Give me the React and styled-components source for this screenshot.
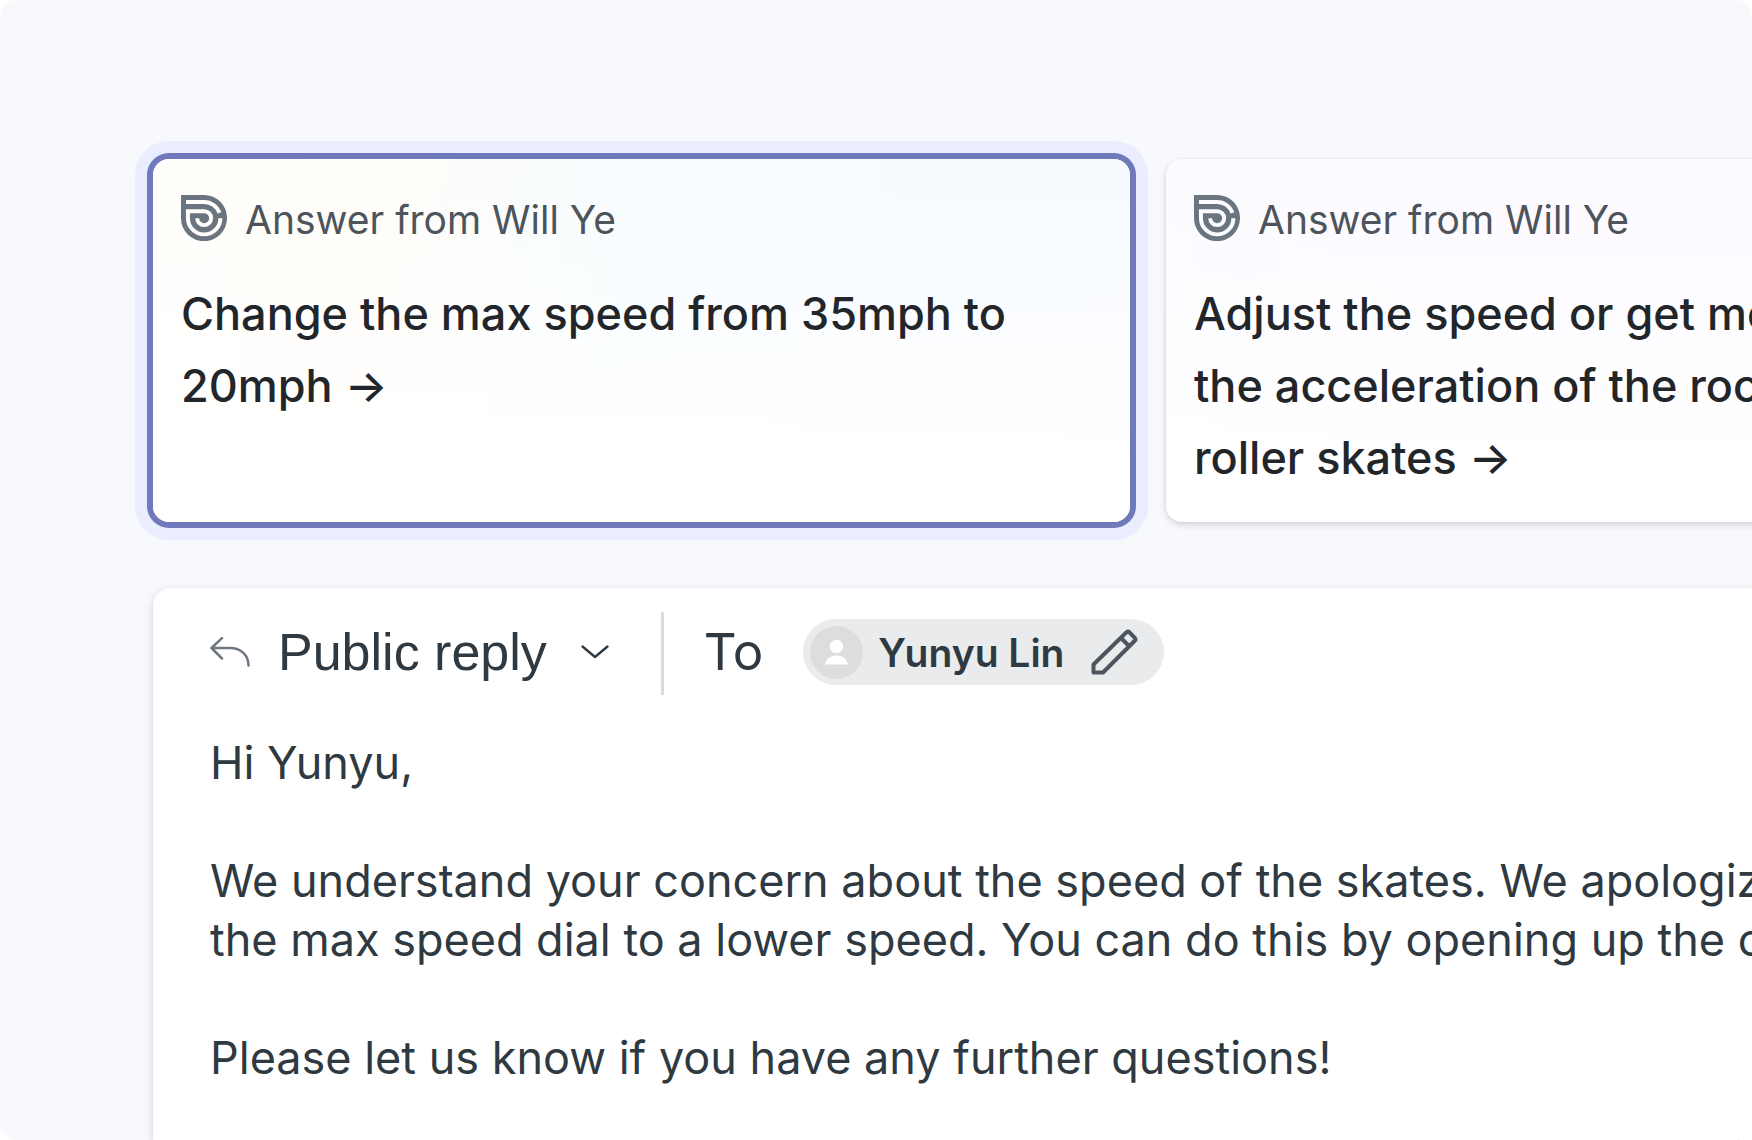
import styled, { createGlobalStyle } from "styled-components";
import React, { useState } from "react";

const GlobalStyle = createGlobalStyle`
  * {
    box-sizing: border-box;
  }

  body {
    margin: 0;
    background: #fff;
    font-family: Inter, "Liberation Sans", sans-serif;
  }

  button, select, textarea {
    margin: 0;
    padding: 0;
    border: none;
    background: none;
    font-family: inherit;
  }
`

const Page = styled.main`
  display: flex;
  flex-direction: column;
  gap: 66px;
  height: 100vh;
  padding: 159px 0 0 153px;
  overflow: hidden;
  border-radius: 18px;
  background: #f8f9fd;
`

const AnswerList = styled.div`
  display: flex;
  flex: none;
  gap: 36px;
`

const AnswerCard = styled.button`
  display: flex;
  flex: 0 0 61.1%;
  flex-direction: column;
  gap: 33px;
  padding: 36px 28px 28px;
  border-radius: 16px;
  background: ${({ $tint }) => `linear-gradient(to bottom, rgba(255, 255, 255, 0), #fff 85%), ${$tint}`};
  box-shadow: ${({ $selected }) => $selected
    ? "0 0 0 6px #707abb, 0 0 0 18px #eaedff"
    : "0 3px 6px rgba(23, 26, 38, 0.16), 0 0 3px rgba(23, 26, 38, 0.06)"};
  text-align: left;
  cursor: pointer;
`

const AnswerHead = styled.span`
  display: flex;
  gap: 18px;
  color: #4d545b;
  font-size: 39px;
  line-height: 50px;
`

const AnswerTitle = styled.span`
  color: #22262a;
  font-size: 45px;
  font-weight: 500;
  line-height: 72px;
  white-space: pre-line;
`

const Editor = styled.section`
  display: flex;
  flex: 1;
  flex-direction: column;
  gap: 38px;
  padding: 24px 0 0 57px;
  border-radius: 18px 0 0 0;
  background: #fff;
  box-shadow: 0 3px 8px rgba(23, 26, 38, 0.18);
`

const Toolbar = styled.div`
  display: flex;
  align-items: center;
  height: 83px;
  padding-bottom: 3px;
  color: #2f3941;
`

const ReplyType = styled.label`
  display: flex;
  align-items: center;
  gap: 28px;
`

const ReplySelect = styled.select`
  appearance: none;
  field-sizing: content;
  padding-right: 6px;
  color: inherit;
  font-family: "Liberation Sans", Arial, sans-serif;
  font-size: 52px;
  line-height: 60px;
`

const Divider = styled.span`
  align-self: flex-start;
  width: 3px;
  height: 83px;
  margin: 0 40px 0 52px;
  background: #d8dcde;
`

const ToLabel = styled.span`
  font-size: 51px;
  line-height: 60px;
`

const Recipient = styled.span`
  display: flex;
  align-items: center;
  height: 66px;
  margin-left: 40px;
  padding: 0 26px 0 7px;
  border-radius: 33px;
  background: #e9ebed;
  font-size: 39px;
  font-weight: 600;
`

const RecipientName = styled.span`
  margin: 0 27px 0 15px;
`

const EditButton = styled.button`
  display: flex;
  cursor: pointer;
`

const ReplyText = styled.textarea`
  flex: 1;
  min-height: 400px;
  overflow: hidden;
  resize: none;
  outline: none;
  color: #2f3941;
  font-size: 45px;
  line-height: 59px;
  white-space: pre;
`

function LogoIcon({ id }) {
  return (
    <svg width="46" height="46" viewBox="0 0 139 139" fill="none" aria-hidden="true">
      <mask id={id}>
        <path d="M0 0H70A69 69 0 0 1 139 70A69 69 0 0 1 0 70Z" fill="#fff" />
        <path d="M15 21H70A49 49 0 0 1 116 54" stroke="#000" strokeWidth="12" />
        <path d="M119 70A49 49 0 0 1 21 70V49H70A21 21 0 1 1 49 70" stroke="#000" strokeWidth="12" />
      </mask>
      <path d="M0 0H139V139H0Z" fill="#6b757f" mask={`url(#${id})`} />
    </svg>
  )
}

function ReplyIcon() {
  return (
    <svg width="40" height="30" viewBox="0 0 40 30" fill="none" stroke="#6f7782" strokeWidth="2.5" strokeLinecap="round" strokeLinejoin="round" aria-hidden="true">
      <path d="M12 1.200L1.500 11L12 21.500M1.500 11H20C31 11 38.500 18 38.500 28.500" />
    </svg>
  )
}

function ChevronIcon() {
  return (
    <svg width="28" height="14" viewBox="0 0 28 14" fill="none" stroke="#2f3941" strokeWidth="2.3" strokeLinecap="round" strokeLinejoin="round" aria-hidden="true">
      <path d="M1.500 1.500L14 12L26.500 1.500" />
    </svg>
  )
}

function AvatarIcon() {
  return (
    <svg width="53" height="53" viewBox="0 0 53 53" fill="#fff" aria-hidden="true">
      <circle cx="26.5" cy="26.5" r="26.5" fill="#ddd" />
      <circle cx="26.5" cy="20.5" r="6.7" />
      <path d="M15 38.500C16 32.500 21 29.500 26.500 29.500C32 29.500 37 32.500 38 38.500Z" />
    </svg>
  )
}

function PencilIcon() {
  return (
    <svg width="47" height="46" viewBox="0 0 47 46" fill="none" stroke="#4d565f" strokeWidth="4" strokeLinejoin="round" aria-hidden="true">
      <path d="M2.500 43.500V35.500L35.500 3.300Q37 2 38.500 3.300L44 9.200Q45 10.500 44 11.500L12 43.500ZM30 9L38 17" />
    </svg>
  )
}

const answers = [
  {
    id: "max-speed",
    title: "Change the max speed from 35mph to 20mph →",
    tint: "linear-gradient(100deg, #fffefb 0%, #fffdf8 20%, #f6fcff 48%, #f6faff 100%)"
  },
  {
    id: "acceleration",
    title: "Adjust the speed or get more info on\nthe acceleration of the rocket\nroller skates →",
    tint: "linear-gradient(80deg, #f9fcff 0%, #fcfaff 20%, #fcf9ff 100%)"
  }
]

const defaultReply = `Hi Yunyu,

We understand your concern about the speed of the skates. We apologize
the max speed dial to a lower speed. You can do this by opening up the co

Please let us know if you have any further questions!`

function Answer({ answer, selected, onSelect }) {
  return (
    <AnswerCard type="button" $tint={answer.tint} $selected={selected} aria-pressed={selected} onClick={onSelect}>
      <AnswerHead>
        <LogoIcon id={`logo-${answer.id}`} />
        Answer from Will Ye
      </AnswerHead>
      <AnswerTitle>{answer.title}</AnswerTitle>
    </AnswerCard>
  )
}

function App() {
  const [selectedId, setSelectedId] = useState("max-speed")
  const [reply, setReply] = useState(defaultReply)

  return (
    <Page>
      <GlobalStyle />
      <AnswerList>
        {answers.map((answer) => (
          <Answer
            key={answer.id}
            answer={answer}
            selected={answer.id === selectedId}
            onSelect={() => setSelectedId(answer.id)}
          />
        ))}
      </AnswerList>
      <Editor>
        <Toolbar>
          <ReplyType>
            <ReplyIcon />
            <ReplySelect aria-label="Reply type">
              <option>Public reply</option>
            </ReplySelect>
            <ChevronIcon />
          </ReplyType>
          <Divider />
          <ToLabel>To</ToLabel>
          <Recipient>
            <AvatarIcon />
            <RecipientName>Yunyu Lin</RecipientName>
            <EditButton type="button" aria-label="Edit recipient">
              <PencilIcon />
            </EditButton>
          </Recipient>
        </Toolbar>
        <ReplyText
          aria-label="Reply"
          value={reply}
          onChange={(e) => setReply(e.target.value)}
        />
      </Editor>
    </Page>
  );
}

export default App;
